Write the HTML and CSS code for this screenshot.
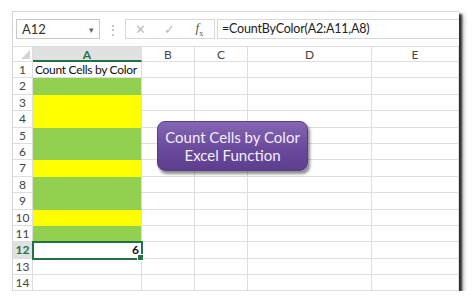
FILE: index.html
```html
<!DOCTYPE html>
<html lang="en">
<head>
    <meta charset="UTF-8">
    <title>Count Cells by Color</title>
    <link rel="stylesheet" href="styles.css">
</head>
<body>

    <div class="window">
        <div class="toolbar">
            <div class="name-box">
                <span>A12</span>
                <span class="arrow">&#9662;</span>
            </div>
            <div class="grip">&#8942;</div>
            <div class="fx-buttons">
                <span class="btn">&#10005;</span>
                <span class="btn">&#10003;</span>
                <span class="btn fx"><i>f</i><sub>x</sub></span>
            </div>
            <div class="formula">=CountByColor(A2:A11,A8)</div>
        </div>

        <div class="sheet">
            <div class="row head">
                <div class="corner"></div>
                <div class="col active">A</div>
                <div class="col">B</div>
                <div class="col">C</div>
                <div class="col">D</div>
                <div class="col">E</div>
            </div>
            <div class="row"><div class="num">1</div><div class="cell title">Count Cells by Color</div><div class="cell"></div><div class="cell"></div><div class="cell"></div><div class="cell"></div></div>
            <div class="row"><div class="num">2</div><div class="cell green"></div><div class="cell"></div><div class="cell"></div><div class="cell"></div><div class="cell"></div></div>
            <div class="row"><div class="num">3</div><div class="cell yellow"></div><div class="cell"></div><div class="cell"></div><div class="cell"></div><div class="cell"></div></div>
            <div class="row"><div class="num">4</div><div class="cell yellow"></div><div class="cell"></div><div class="cell"></div><div class="cell"></div><div class="cell"></div></div>
            <div class="row"><div class="num">5</div><div class="cell green"></div><div class="cell"></div><div class="cell"></div><div class="cell"></div><div class="cell"></div></div>
            <div class="row"><div class="num">6</div><div class="cell green"></div><div class="cell"></div><div class="cell"></div><div class="cell"></div><div class="cell"></div></div>
            <div class="row"><div class="num">7</div><div class="cell yellow"></div><div class="cell"></div><div class="cell"></div><div class="cell"></div><div class="cell"></div></div>
            <div class="row"><div class="num">8</div><div class="cell green"></div><div class="cell"></div><div class="cell"></div><div class="cell"></div><div class="cell"></div></div>
            <div class="row"><div class="num">9</div><div class="cell green"></div><div class="cell"></div><div class="cell"></div><div class="cell"></div><div class="cell"></div></div>
            <div class="row"><div class="num">10</div><div class="cell yellow"></div><div class="cell"></div><div class="cell"></div><div class="cell"></div><div class="cell"></div></div>
            <div class="row"><div class="num">11</div><div class="cell green"></div><div class="cell"></div><div class="cell"></div><div class="cell"></div><div class="cell"></div></div>
            <div class="row"><div class="num active">12</div><div class="cell selected">6<span class="handle"></span></div><div class="cell"></div><div class="cell"></div><div class="cell"></div><div class="cell"></div></div>
            <div class="row"><div class="num">13</div><div class="cell"></div><div class="cell"></div><div class="cell"></div><div class="cell"></div><div class="cell"></div></div>
            <div class="row"><div class="num">14</div><div class="cell"></div><div class="cell"></div><div class="cell"></div><div class="cell"></div><div class="cell"></div></div>

            <div class="callout">Count Cells by Color<br>Excel Function</div>
        </div>
    </div>

</body>
</html>
```

FILE: styles.css
```css
html, body {
    margin: 0;
    padding: 0;
    background: #fff;
    font-family: Lato, 'Open Sans', sans-serif;
}

.window {
    position: relative;
    margin: 11px 0 0 12px;
    width: 447px;
    box-sizing: border-box;
    background: #fff;
    border-top: 1px solid #d6d6d6;
    border-left: 1px solid #d6d6d6;
    box-shadow: 3px 3px 2px rgba(0, 0, 0, 0.75), 4px 4px 5px rgba(0, 0, 0, 0.35);
}

.toolbar {
    display: flex;
    align-items: center;
    height: 34px;
    padding-left: 3px;
}

.name-box {
    display: flex;
    justify-content: space-between;
    align-items: center;
    width: 84px;
    height: 20px;
    box-sizing: border-box;
    border: 1px solid #c8c8c8;
    padding: 0 5px 0 5px;
    font-size: 13px;
    color: #333;
}

.name-box .arrow {
    font-size: 9px;
    color: #666;
}

.grip {
    width: 25px;
    text-align: center;
    color: #aaa;
    font-size: 12px;
}

.fx-buttons {
    display: flex;
    align-items: center;
    width: 90px;
    height: 20px;
    box-sizing: border-box;
    border: 1px solid #d8d8d8;
}

.btn {
    flex: 1;
    text-align: center;
    color: #bbb;
    font-size: 13px;
}

.btn.fx {
    color: #555;
    font-family: 'Liberation Serif', serif;
    font-size: 13px;
}

.btn.fx sub {
    font-size: 8px;
}

.formula {
    flex: 1;
    height: 20px;
    margin-left: 2px;
    box-sizing: border-box;
    border: 1px solid #d8d8d8;
    border-right: none;
    padding-left: 4px;
    line-height: 18px;
    font-size: 12.5px;
    letter-spacing: -0.2px;
    color: #222;
}

.sheet {
    position: relative;
    border-top: 1px solid #dcdcdc;
}

.row {
    display: grid;
    grid-template-columns: 20px 109px 53px 53px 124px 1fr;
    height: 16.4px;
}

.row.head {
    height: 15px;
}

.row > div {
    box-sizing: border-box;
    border-right: 1px solid #dedede;
    border-bottom: 1px solid #dedede;
    font-size: 12px;
    line-height: 15px;
    color: #111;
    overflow: hidden;
    white-space: nowrap;
}

.corner {
    position: relative;
}

.corner::after {
    content: "";
    position: absolute;
    right: 2px;
    bottom: 2px;
    border-left: 9px solid transparent;
    border-bottom: 9px solid #d4d4d4;
}

.col {
    text-align: center;
    color: #444 !important;
}

.col.active {
    background: #e1e1e1;
    color: #217346 !important;
    font-weight: bold;
    border-bottom: 2px solid #217346 !important;
}

.num {
    text-align: center;
    color: #444 !important;
}

.num.active {
    background: #e1e1e1;
    color: #217346 !important;
    font-weight: bold;
}

.cell {
    padding-left: 2px;
}

.cell.title {
    letter-spacing: -0.3px;
}

.green {
    background: #92d050;
    border-bottom-color: #92d050 !important;
}

.yellow {
    background: #ffff00;
    border-bottom-color: #ffff00 !important;
}

.selected {
    position: relative;
    text-align: right;
    padding-right: 2px;
    font-weight: bold;
    outline: 2px solid #217346;
    outline-offset: -1px;
    overflow: visible !important;
}

.handle {
    position: absolute;
    right: -3px;
    bottom: -3px;
    width: 5px;
    height: 5px;
    background: #217346;
    border: 1px solid #fff;
}

.callout {
    position: absolute;
    left: 144px;
    top: 74px;
    width: 151px;
    height: 50px;
    box-sizing: border-box;
    border-radius: 8px;
    background: linear-gradient(to bottom, #8466b4, #6a4a9c 55%, #5d3e8e);
    border: 1px solid #5a3c88;
    box-shadow: 2px 3px 3px rgba(0, 0, 0, 0.45);
    color: #f4eefb;
    font-size: 15px;
    line-height: 18px;
    text-align: center;
    padding-top: 6px;
}
```
